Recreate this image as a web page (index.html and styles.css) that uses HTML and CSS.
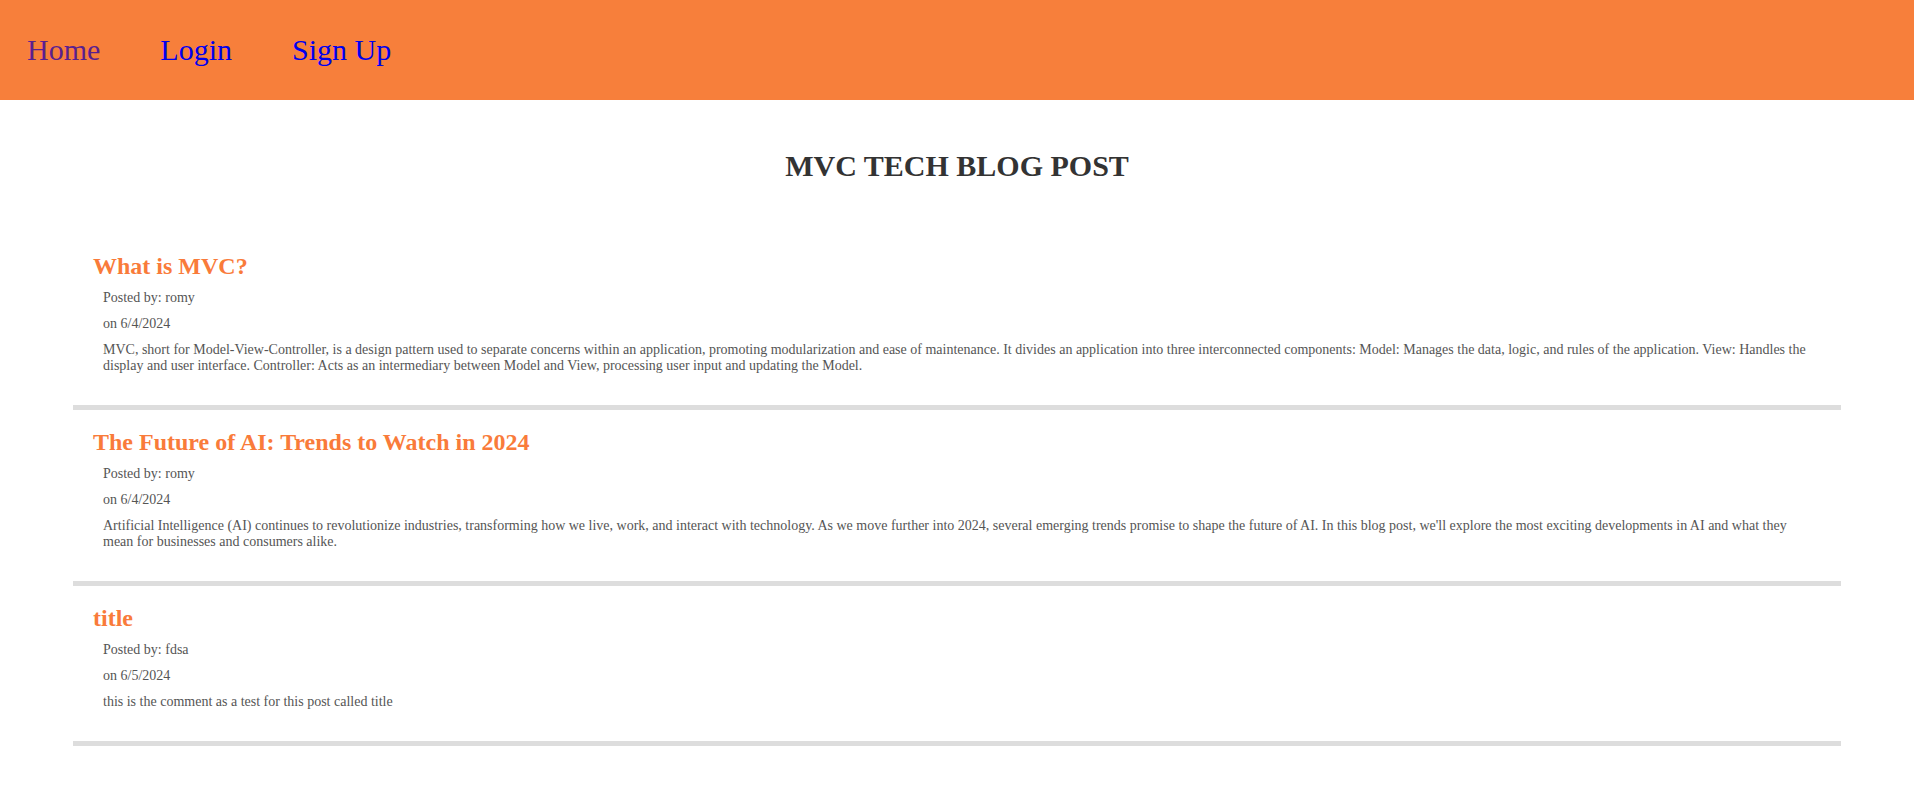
FILE: index.html
```html
<!DOCTYPE html>
<html lang="en">
<head>
<meta charset="utf-8">
<title>MVC Tech Blog</title>
<link rel="stylesheet" href="styles.css">
</head>
<body>
<header class="site-header">
  <nav class="nav">
    <a class="nav-link visited" href="#">Home</a>
    <a class="nav-link" href="#">Login</a>
    <a class="nav-link" href="#">Sign Up</a>
  </nav>
</header>
<main class="main">
  <h1 class="page-title">MVC TECH BLOG POST</h1>
  <section class="posts">
    <article class="post">
      <h2 class="post-title">What is MVC?</h2>
      <div class="post-body">
        <p class="meta">Posted by: romy</p>
        <p class="meta">on 6/4/2024</p>
        <p class="content">MVC, short for Model-View-Controller, is a design pattern used to separate concerns within an application, promoting modularization and ease of maintenance. It divides an application into three interconnected components: Model: Manages the data, logic, and rules of the application. View: Handles the display and user interface. Controller: Acts as an intermediary between Model and View, processing user input and updating the Model.</p>
      </div>
    </article>
    <article class="post">
      <h2 class="post-title">The Future of AI: Trends to Watch in 2024</h2>
      <div class="post-body">
        <p class="meta">Posted by: romy</p>
        <p class="meta">on 6/4/2024</p>
        <p class="content">Artificial Intelligence (AI) continues to revolutionize industries, transforming how we live, work, and interact with technology. As we move further into 2024, several emerging trends promise to shape the future of AI. In this blog post, we'll explore the most exciting developments in AI and what they mean for businesses and consumers alike.</p>
      </div>
    </article>
    <article class="post">
      <h2 class="post-title">title</h2>
      <div class="post-body">
        <p class="meta">Posted by: fdsa</p>
        <p class="meta">on 6/5/2024</p>
        <p class="content">this is the comment as a test for this post called title</p>
      </div>
    </article>
  </section>
</main>
</body>
</html>
```
FILE: styles.css
```css
html, body {
  margin: 0;
  padding: 0;
  background: #ffffff;
  font-family: "Liberation Serif", "Times New Roman", serif;
}

.site-header {
  height: 100px;
  background: #f77f3b;
  display: flex;
  align-items: center;
}

.nav {
  display: flex;
  gap: 60px;
  padding-left: 27px;
}

.nav-link {
  font-size: 30px;
  line-height: 34.5px;
  color: #0000ee;
  text-decoration: none;
}

.nav-link.visited {
  color: #5b1f8e;
}

.main {
  padding: 0 73px;
}

.page-title {
  margin: 49px 0 49px;
  text-align: center;
  font-size: 30px;
  font-weight: bold;
  line-height: 34.5px;
  color: #333333;
}

.posts {
  display: flex;
  flex-direction: column;
}

.post {
  padding: 20px 20px 21px;
  border-bottom: 5px solid #dddddd;
}

.post + .post {
  padding-top: 19px;
}

.post-title {
  margin: 0;
  font-size: 24px;
  font-weight: bold;
  line-height: 27px;
  color: #f97b3a;
}

.post-body {
  padding: 0 10px;
  color: #555555;
  font-size: 14px;
  line-height: 16px;
}

.post-body p {
  margin: 10px 0;
}
```
